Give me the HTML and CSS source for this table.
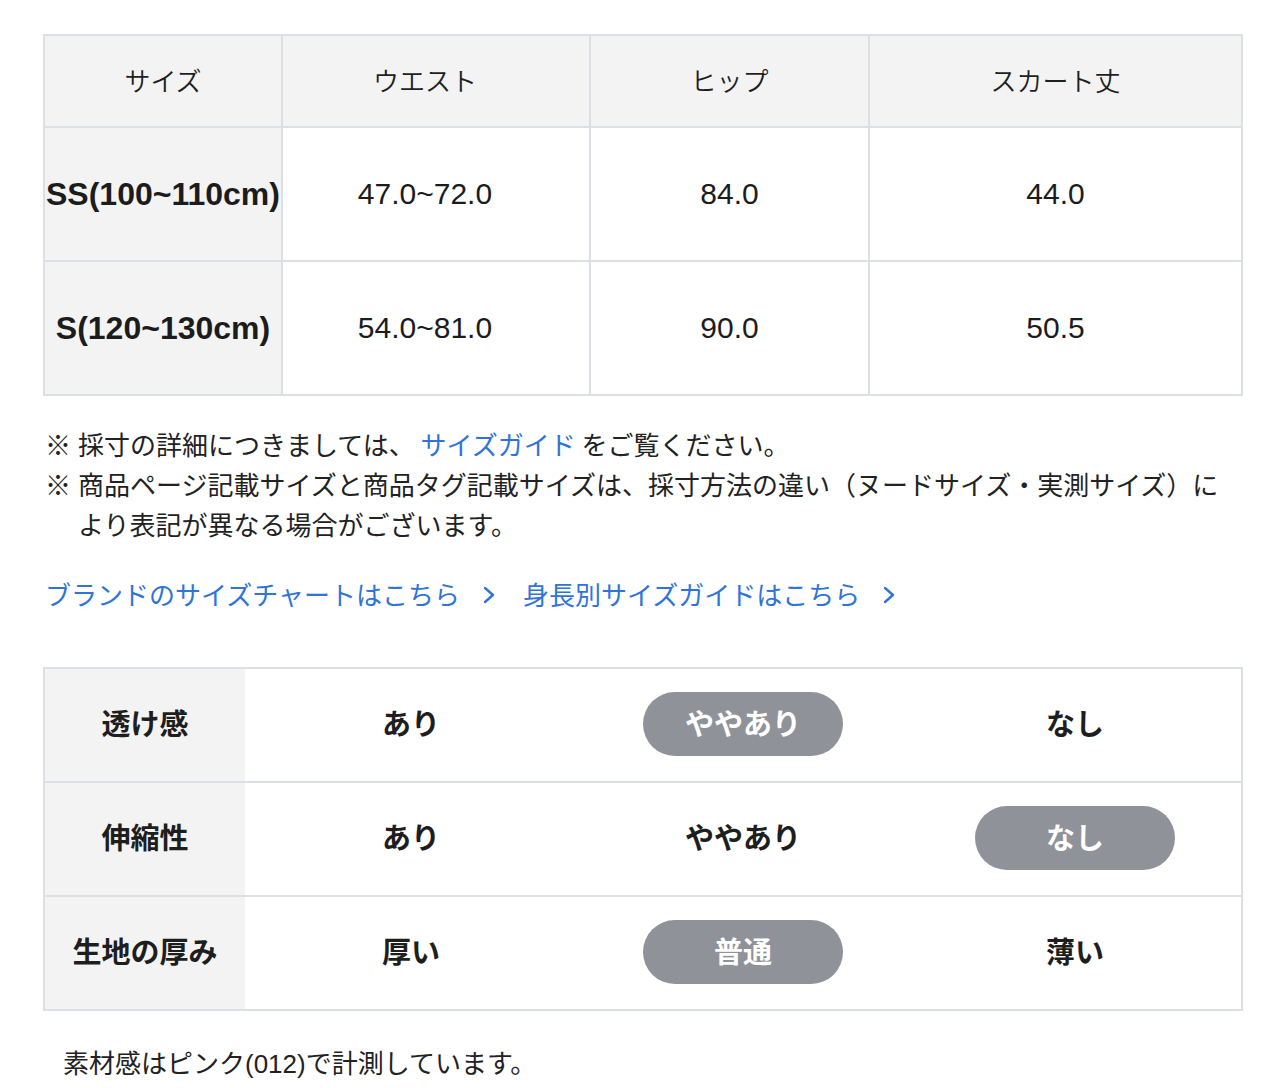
FILE: index.html
```html
<!DOCTYPE html>
<html lang="ja">
<head>
<meta charset="utf-8">
<title>サイズ表</title>
<link rel="stylesheet" href="styles.css">
</head>
<body>
<div class="page">
  <table class="size-table">
    <thead>
      <tr>
        <th class="col-size">サイズ</th>
        <th class="col-waist">ウエスト</th>
        <th class="col-hip">ヒップ</th>
        <th class="col-len">スカート丈</th>
      </tr>
    </thead>
    <tbody>
      <tr>
        <th class="row-head">SS(100~110cm)</th>
        <td class="waist">47.0~72.0</td>
        <td>84.0</td>
        <td>44.0</td>
      </tr>
      <tr>
        <th class="row-head">S(120~130cm)</th>
        <td class="waist">54.0~81.0</td>
        <td>90.0</td>
        <td>50.5</td>
      </tr>
    </tbody>
  </table>

  <ul class="notes">
    <li><span class="mark">※</span><span class="note-text">採寸の詳細につきましては、 <a class="inline-link" href="#">サイズガイド</a> をご覧ください。</span></li>
    <li><span class="mark">※</span><span class="note-text">商品ページ記載サイズと商品タグ記載サイズは、採寸方法の違い（ヌードサイズ・実測サイズ）により表記が異なる場合がございます。</span></li>
  </ul>

  <div class="links">
    <a class="guide-link" href="#">ブランドのサイズチャートはこちら<svg class="chev" viewBox="0 0 13 18" width="13" height="18"><polyline points="2,2 10,9 2,16" fill="none" stroke="currentColor" stroke-width="2.4" stroke-linecap="round" stroke-linejoin="round"/></svg></a>
    <a class="guide-link" href="#">身長別サイズガイドはこちら<svg class="chev" viewBox="0 0 13 18" width="13" height="18"><polyline points="2,2 10,9 2,16" fill="none" stroke="currentColor" stroke-width="2.4" stroke-linecap="round" stroke-linejoin="round"/></svg></a>
  </div>

  <table class="feel-table">
    <tbody>
      <tr>
        <th class="feel-head">透け感</th>
        <td>あり</td>
        <td class="has-pill"><span class="pill">ややあり</span></td>
        <td>なし</td>
      </tr>
      <tr>
        <th class="feel-head">伸縮性</th>
        <td>あり</td>
        <td>ややあり</td>
        <td class="has-pill"><span class="pill">なし</span></td>
      </tr>
      <tr>
        <th class="feel-head">生地の厚み</th>
        <td>厚い</td>
        <td class="has-pill"><span class="pill">普通</span></td>
        <td>薄い</td>
      </tr>
    </tbody>
  </table>

  <p class="footnote">素材感はピンク(012)で計測しています。</p>
</div>
</body>
</html>
```

FILE: styles.css
```css
* {
  box-sizing: border-box;
}

html, body {
  margin: 0;
  padding: 0;
  background: #ffffff;
}

body {
  font-family: "Liberation Sans", "Noto Sans CJK JP", sans-serif;
  color: #222222;
}

.page {
  width: 1243px;
  padding: 34px 0 0 43px;
}

/* ---------- size table ---------- */
.size-table {
  width: 1200px;
  border-collapse: separate;
  border-spacing: 0;
  table-layout: fixed;
  border-top: 2px solid #dcdfe4;
  border-left: 2px solid #dcdfe4;
}

.size-table th,
.size-table td {
  border-right: 2px solid #dcdfe4;
  border-bottom: 2px solid #dcdfe4;
  padding: 0;
  text-align: center;
  vertical-align: middle;
}

.size-table thead th {
  height: 92px;
  padding-bottom: 4px;
  background: #f3f3f3;
  font-family: "Noto Sans CJK JP", sans-serif;
  font-weight: 350;
  font-size: 26px;
  color: #1f1f1f;
}

.col-size { width: 238px; }
.col-waist { width: 308px; }
.col-hip { width: 279px; }
.col-len { width: 373px; }

.size-table thead th.col-waist,
.size-table td.waist {
  padding-right: 22px;
}

.size-table tbody th,
.size-table tbody td {
  height: 134px;
}

.row-head {
  background: #f3f3f3;
  font-weight: 700;
  font-size: 32px;
  white-space: nowrap;
  color: #1c1c1c;
}

.size-table td {
  font-size: 30px;
  color: #1c1c1c;
}

/* ---------- notes ---------- */
.notes {
  list-style: none;
  margin: 28px 0 0 0;
  padding: 0 0 0 2px;
  width: 1200px;
  font-family: "Noto Sans CJK JP", sans-serif;
  font-size: 26px;
  line-height: 40px;
  color: #222222;
}

.notes li {
  display: flex;
}

.mark {
  flex: 0 0 33px;
}

.note-text {
  flex: 1;
}

.inline-link {
  color: #2f74d9;
  text-decoration: none;
}

/* ---------- links ---------- */
.links {
  display: flex;
  align-items: center;
  margin-top: 30px;
  padding-left: 2px;
  height: 40px;
  font-family: "Noto Sans CJK JP", sans-serif;
  font-size: 26px;
  line-height: 40px;
}

.guide-link {
  display: flex;
  align-items: center;
  color: #2f74d9;
  text-decoration: none;
  margin-right: 27px;
}

.chev {
  margin-left: 23px;
  margin-top: 2px;
  color: #2f74d9;
}

/* ---------- feel table ---------- */
.feel-table {
  margin-top: 53px;
  width: 1200px;
  border-collapse: separate;
  border-spacing: 0;
  table-layout: fixed;
  border-top: 2px solid #dcdfe4;
  border-left: 2px solid #dcdfe4;
  border-right: 2px solid #dcdfe4;
}

.feel-table th,
.feel-table td {
  height: 114px;
  padding: 0 0 6px 0;
  border-bottom: 2px solid #dcdfe4;
  text-align: center;
  vertical-align: middle;
  font-family: "Noto Sans CJK JP", sans-serif;
  font-weight: 700;
  font-size: 29px;
  color: #1e1e1e;
}

.feel-table td.has-pill {
  padding: 0 0 2px 0;
}

.feel-head {
  width: 200px;
  background: #f3f3f3;
}

.pill {
  display: inline-flex;
  align-items: center;
  justify-content: center;
  width: 200px;
  height: 64px;
  padding-bottom: 5px;
  border-radius: 32px;
  background: #8f9299;
  color: #ffffff;
}

/* ---------- footnote ---------- */
.footnote {
  margin: 33px 0 0 0;
  padding-left: 20px;
  font-family: "Liberation Sans", "Noto Sans CJK JP", sans-serif;
  font-size: 26px;
  line-height: 40px;
  color: #222222;
}
```
